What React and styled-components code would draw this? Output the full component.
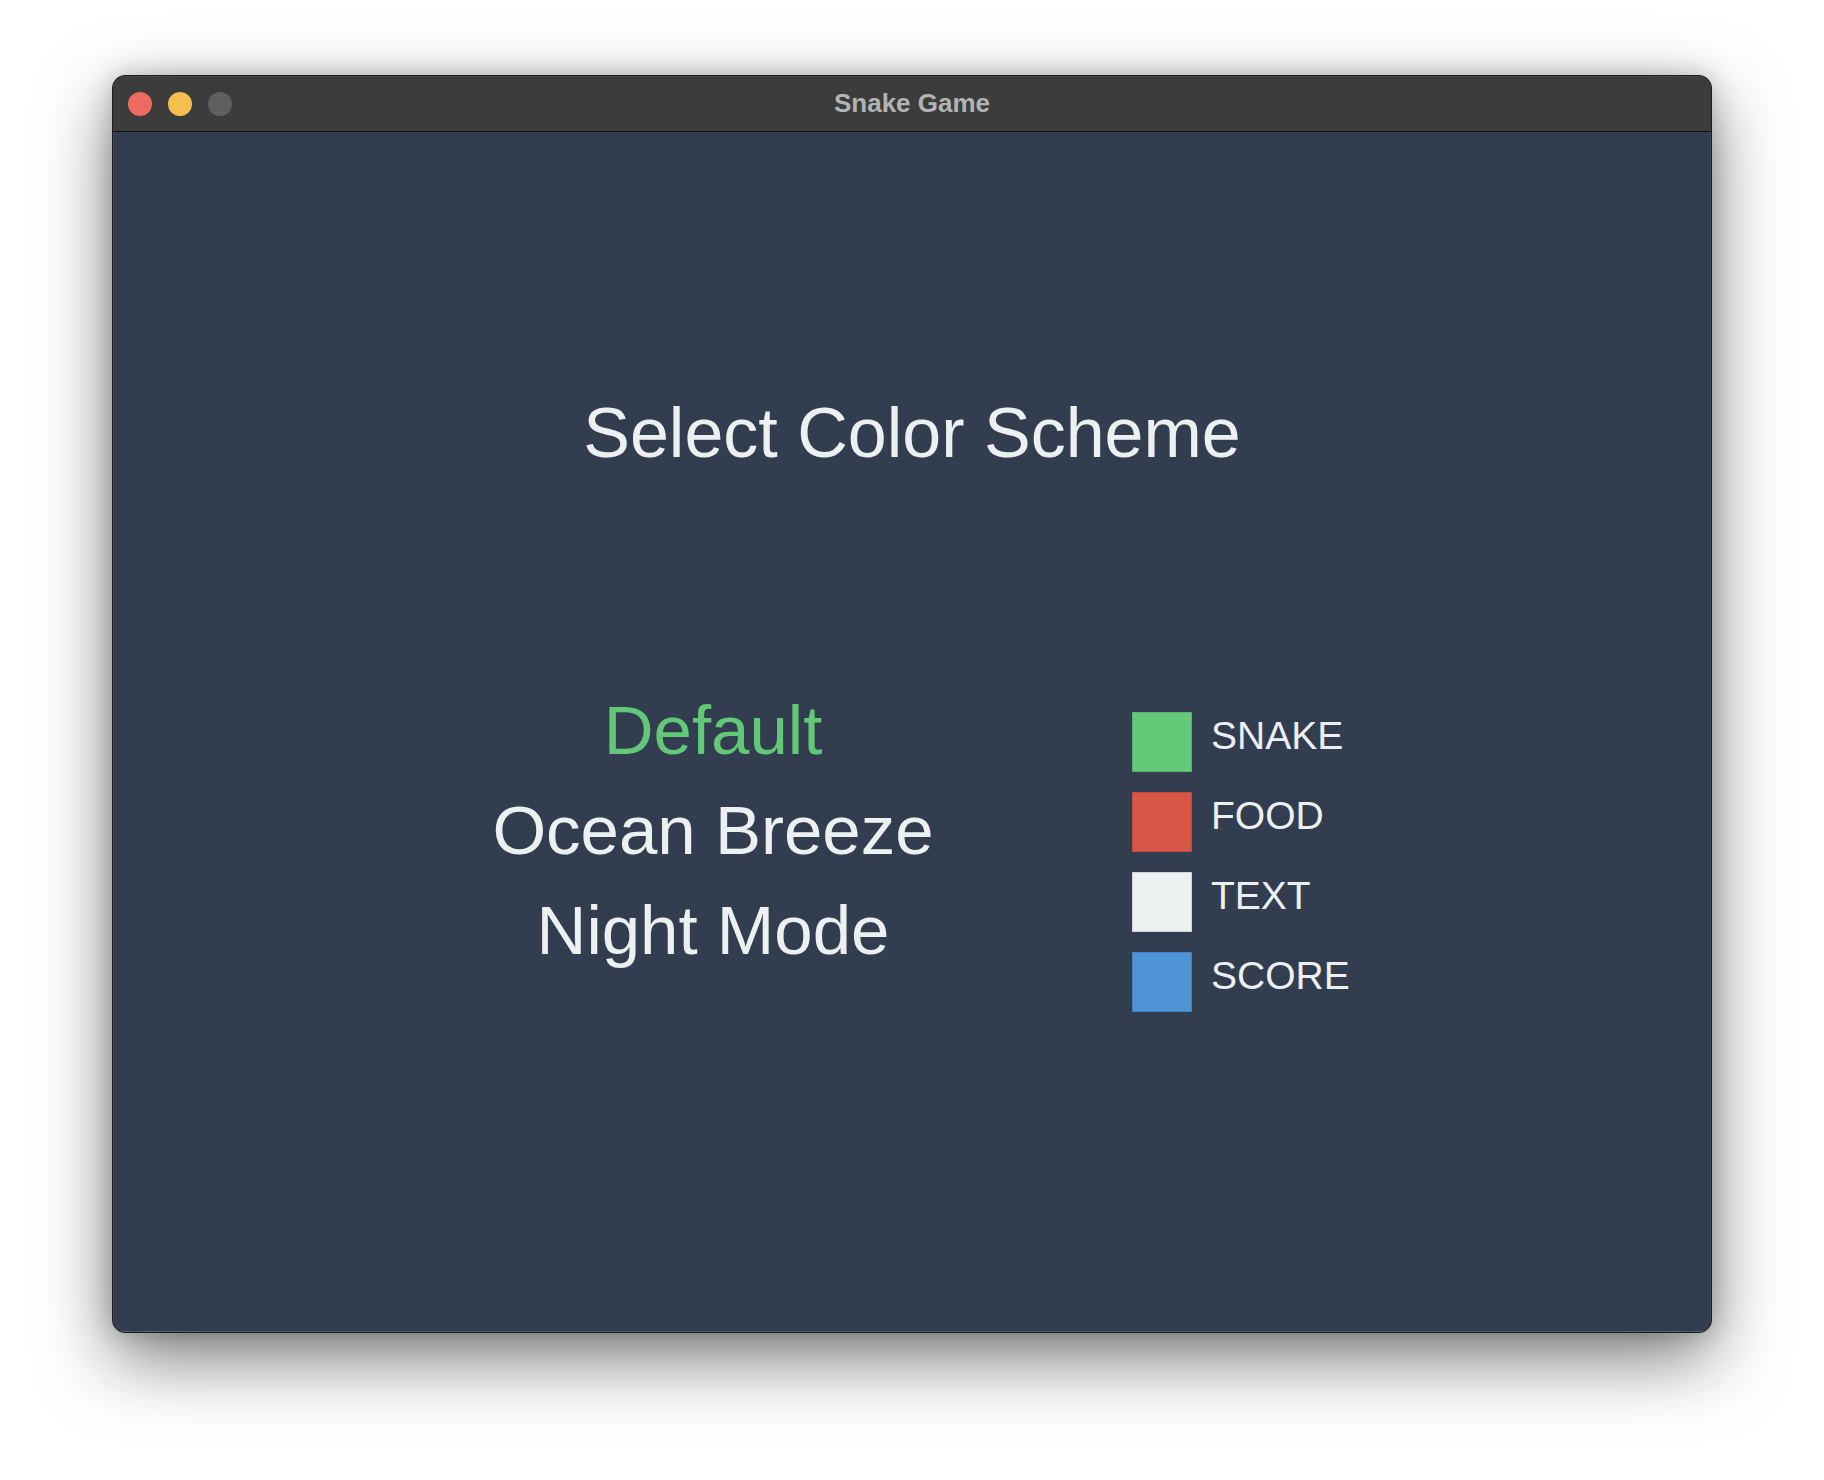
import React from 'react';
import styled, { createGlobalStyle } from 'styled-components';

const GlobalStyle = createGlobalStyle`
  html, body {
    margin: 0;
    padding: 0;
    background: #ffffff;
  }
  body {
    font-family: "Liberation Sans", Arial, Helvetica, sans-serif;
  }
`;

const Page = styled.div`
  width: 1824px;
  height: 1480px;
  padding: 75px 0 0 112px;
  box-sizing: border-box;
`;

const Window = styled.div`
  width: 1600px;
  box-sizing: border-box;
  border: 1px solid #1c1c1c;
  border-radius: 13px;
  overflow: hidden;
  background: #323e4f;
  box-shadow: 0 26px 72px rgba(0, 0, 0, 0.52), 0 0 24px rgba(0, 0, 0, 0.2);
`;

const TitleBar = styled.div`
  height: 56px;
  padding-bottom: 1px;
  box-sizing: border-box;
  display: grid;
  grid-template-columns: 1fr auto 1fr;
  align-items: center;
  background: #3c3c3c;
  border-bottom: 1px solid #111111;
  box-shadow: inset 0 1px 0 rgba(255, 255, 255, 0.08);
`;

const Lights = styled.div`
  display: flex;
  gap: 16px;
  padding-left: 15px;
  padding-top: 2px;
`;

const Light = styled.span`
  width: 24px;
  height: 24px;
  border-radius: 50%;
  background: ${(p) => p.color};
`;

const Title = styled.div`
  font-size: 26px;
  font-weight: 700;
  color: #b3b3b3;
  line-height: 1;
`;

const Content = styled.div`
  height: 1200px;
  box-sizing: border-box;
  padding-top: 261px;
  display: flex;
  flex-direction: column;
  box-shadow: inset 0 -1px 0 rgba(255, 255, 255, 0.18), inset -1px 0 0 rgba(255, 255, 255, 0.08), inset 1px 0 0 rgba(255, 255, 255, 0.08);
`;

const Heading = styled.h1`
  margin: 0;
  font-size: 70px;
  font-weight: 400;
  line-height: 80px;
  color: #ecf0f1;
  text-align: center;
`;

const Body = styled.div`
  display: flex;
  align-items: flex-start;
  margin-top: 208px;
`;

const Menu = styled.div`
  width: 500px;
  margin-left: 350px;
  display: flex;
  flex-direction: column;
`;

const MenuItem = styled.div`
  font-size: 69px;
  line-height: 100px;
  text-align: center;
  white-space: nowrap;
  color: ${(p) => (p.selected ? '#62c878' : '#ecf0f1')};
`;

const Legend = styled.div`
  margin-left: 169px;
  margin-top: 31px;
  display: flex;
  flex-direction: column;
  gap: 20px;
`;

const LegendRow = styled.div`
  display: flex;
  align-items: flex-start;
  gap: 19px;
  height: 60px;
`;

const Swatch = styled.span`
  width: 60px;
  height: 60px;
  background: ${(p) => p.color};
  box-shadow: inset 0 0 0 1px rgba(0, 0, 0, 0.12);
`;

const Label = styled.span`
  font-size: 39px;
  line-height: 48px;
  color: #ecf0f1;
`;

const schemes = ['Default', 'Ocean Breeze', 'Night Mode'];

const legend = [
  { name: 'SNAKE', color: '#64ca7a' },
  { name: 'FOOD', color: '#d85646' },
  { name: 'TEXT', color: '#ecf0f1' },
  { name: 'SCORE', color: '#4f95d6' },
];

const App = () => {
  const selected = 0;

  return (
    <Page>
      <GlobalStyle />
      <Window>
        <TitleBar>
          <Lights>
            <Light color="#ee6a5f" />
            <Light color="#f5bf4f" />
            <Light color="#5f6160" />
          </Lights>
          <Title>Snake Game</Title>
          <div />
        </TitleBar>
        <Content>
          <Heading>Select Color Scheme</Heading>
          <Body>
            <Menu>
              {schemes.map((name, index) => (
                <MenuItem key={name} selected={index === selected}>
                  {name}
                </MenuItem>
              ))}
            </Menu>
            <Legend>
              {legend.map((item) => (
                <LegendRow key={item.name}>
                  <Swatch color={item.color} />
                  <Label>{item.name}</Label>
                </LegendRow>
              ))}
            </Legend>
          </Body>
        </Content>
      </Window>
    </Page>
  );
};

export default App;
